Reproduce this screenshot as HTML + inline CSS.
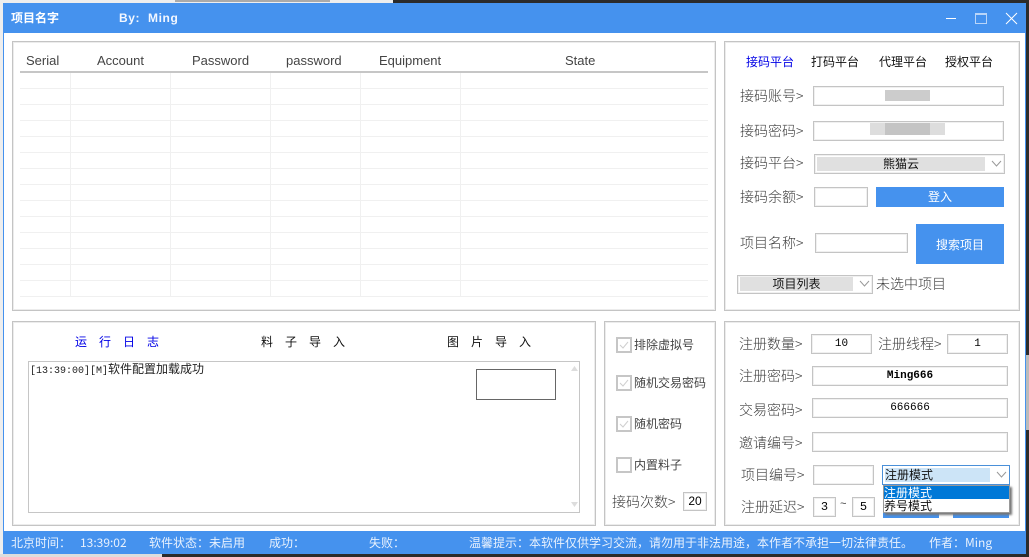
<!DOCTYPE html>
<html><head><meta charset="utf-8">
<style>
html,body{margin:0;padding:0;background:#2b2b2b;}
#r{position:relative;width:1029px;height:557px;overflow:hidden;background:#2b2b2b;font-family:"Liberation Sans","Noto Sans CJK SC",sans-serif;color:#333;}
#r div{position:absolute;box-sizing:border-box;}
.p{border:1px solid #c4c4c4;background:#fff;box-shadow:inset 0 0 0 1px #ececec;}
.i{border:1px solid #c4c4c4;background:#fff;box-shadow:inset 0 0 0 1px #f0f0f0;text-align:center;font:11px/19px "Liberation Mono","Noto Sans CJK SC",monospace;color:#000;}
.l{font:300 14px/20px "Noto Sans CJK SC",sans-serif;color:#3c3c3c;white-space:nowrap;}
.t{font:12px/16px "WenQuanYi Zen Hei","Noto Sans CJK SC",sans-serif;color:#111;white-space:nowrap;}
.b{background:#4592ee;color:#fff;text-align:center;font:12px/20px "Noto Sans CJK SC",sans-serif;}
.s{font:12px/23px "Noto Sans CJK SC","Liberation Sans",sans-serif;color:#e8f1fd;white-space:nowrap;top:531px;}
.h{font:13px/16px "Liberation Sans",sans-serif;color:#444;top:53px;white-space:nowrap;}
.c{width:16px;height:16px;border:2px solid #c6c6c6;background:#fff;left:616px;}
.k{font:12px/16px "Noto Sans CJK SC",sans-serif;color:#444;left:634px;white-space:nowrap;}
</style></head><body>
<div id="r">
<div style="left:0;top:0;width:393px;height:3px;background:#eee"></div>
<div style="left:175px;top:0;width:155px;height:2px;background:#aaa"></div>
<div style="left:0;top:3px;width:3px;height:554px;background:#eee"></div>
<div style="left:0;top:554px;width:162px;height:3px;background:#ddd"></div>
<div style="left:1026px;top:355px;width:3px;height:75px;background:#bbb"></div>

<div style="left:3px;top:3px;width:1023px;height:551px;background:#fff;border-left:1px solid #4592ee;border-right:1px solid #4592ee"></div>
<div style="left:3px;top:3px;width:1023px;height:30px;background:#4592ee"></div>
<div style="left:11px;top:10px;font:bold 12px/16px 'Noto Sans CJK SC',sans-serif;color:#fff;white-space:nowrap">项目名字</div>
<div style="left:119px;top:10px;font:bold 12px/16px 'Liberation Sans',sans-serif;color:#f2f7ff;letter-spacing:.6px;white-space:pre">By:  Ming</div>
<div style="left:946px;top:18px;width:10px;height:1px;background:#fff"></div>
<div style="left:975px;top:13px;width:12px;height:11px;border:1px solid #b9d5f8;border-top-width:2px"></div>
<svg style="position:absolute;left:1005px;top:12px" width="13" height="13" viewBox="0 0 13 13"><path d="M1 1L12 12M12 1L1 12" stroke="#fff" stroke-width="1" fill="none"/></svg>

<!-- table panel -->
<div class="p" style="left:12px;top:41px;width:704px;height:270px"></div>
<div class="h" style="left:26px">Serial</div>
<div class="h" style="left:97px">Account</div>
<div class="h" style="left:192px">Password</div>
<div class="h" style="left:286px">password</div>
<div class="h" style="left:379px">Equipment</div>
<div class="h" style="left:565px">State</div>
<div style="left:20px;top:71px;width:688px;height:2px;background:#c6c6c6"></div>
<svg style="position:absolute;left:20px;top:73px" width="688" height="224"><path d="M0 15.500H688M0 31.500H688M0 47.500H688M0 63.500H688M0 79.500H688M0 95.500H688M0 111.500H688M0 127.500H688M0 143.500H688M0 159.500H688M0 175.500H688M0 191.500H688M0 207.500H688M0 223.500H688M50.500 0V224M150.500 0V224M250.500 0V224M340.500 0V224M440.500 0V224" stroke="#f0f0f0" fill="none"/></svg>

<!-- right top -->
<div class="p" style="left:724px;top:41px;width:296px;height:270px"></div>
<div class="t" style="left:746px;top:54px;color:#0000e6">接码平台</div>
<div class="t" style="left:811px;top:54px">打码平台</div>
<div class="t" style="left:879px;top:54px">代理平台</div>
<div class="t" style="left:945px;top:54px">授权平台</div>
<div class="l" style="left:740px;top:86px">接码账号&gt;</div>
<div class="i" style="left:813px;top:86px;width:191px;height:20px"></div>
<div style="left:885px;top:90px;width:45px;height:11px;background:#ccc"></div>
<div class="l" style="left:740px;top:121px">接码密码&gt;</div>
<div class="i" style="left:813px;top:121px;width:191px;height:20px"></div>
<div style="left:870px;top:123px;width:75px;height:12px;background:#ddd"></div>
<div style="left:885px;top:123px;width:45px;height:12px;background:#c4c4c4"></div>
<div class="l" style="left:740px;top:153px">接码平台&gt;</div>
<div class="i" style="left:814px;top:154px;width:191px;height:20px"></div>
<div style="left:817px;top:157px;width:168px;height:14px;background:#e0e0e0;text-align:center;font:12px/14px 'Noto Sans CJK SC',sans-serif;color:#111">熊猫云</div>
<svg style="position:absolute;left:991px;top:160px" width="11" height="8"><path d="M1 1L5.500 6L10 1" stroke="#999" fill="none"/></svg>
<div class="l" style="left:740px;top:187px">接码余额&gt;</div>
<div class="i" style="left:814px;top:187px;width:54px;height:20px"></div>
<div class="b" style="left:876px;top:187px;width:128px;height:20px">登入</div>
<div class="l" style="left:740px;top:233px">项目名称&gt;</div>
<div class="i" style="left:815px;top:233px;width:93px;height:20px"></div>
<div class="b" style="left:916px;top:224px;width:88px;height:40px;line-height:41px">搜索项目</div>
<div class="i" style="left:737px;top:275px;width:136px;height:19px"></div>
<div style="left:740px;top:277px;width:113px;height:14px;background:#e0e0e0;text-align:center;font:12px/14px 'Noto Sans CJK SC',sans-serif;color:#111">项目列表</div>
<svg style="position:absolute;left:859px;top:280px" width="11" height="8"><path d="M1 1L5.500 6L10 1" stroke="#999" fill="none"/></svg>
<div class="l" style="left:876px;top:274px">未选中项目</div>

<!-- log panel -->
<div class="p" style="left:12px;top:321px;width:584px;height:205px"></div>
<div class="t" style="left:75px;top:334px;color:#0000e6;letter-spacing:12px">运行日志</div>
<div class="t" style="left:261px;top:334px;letter-spacing:12px">料子导入</div>
<div class="t" style="left:447px;top:334px;letter-spacing:12px">图片导入</div>
<div style="left:28px;top:361px;width:552px;height:152px;border:1px solid #c6c6c6;background:#fff"></div>
<div class="t" style="left:30px;top:361px;color:#222"><span style="font:10px/16px 'Liberation Mono',monospace">[13:39:00][M]</span>软件配置加载成功</div>
<div style="left:476px;top:369px;width:80px;height:31px;border:1px solid #666"></div>
<svg style="position:absolute;left:570px;top:363px" width="9" height="146"><path d="M1 8L4.500 3L8 8ZM1 139L8 139L4.500 144Z" fill="#ddd"/></svg>

<!-- mid panel -->
<div class="p" style="left:604px;top:321px;width:112px;height:205px"></div>
<div class="c" style="top:337px"></div><div class="k" style="top:337px">排除虚拟号</div>
<div class="c" style="top:375px"></div><div class="k" style="top:375px">随机交易密码</div>
<div class="c" style="top:416px"></div><div class="k" style="top:416px">随机密码</div>
<div class="c" style="top:457px"></div><div class="k" style="top:457px">内置料子</div>
<svg style="position:absolute;left:616px;top:337px" width="16" height="96"><path d="M4 8L7 11L12 5M4 46L7 49L12 43M4 87L7 90L12 84" stroke="#cfcfcf" fill="none"/></svg>
<div class="l" style="left:612px;top:492px">接码次数&gt;</div>
<div class="i" style="left:683px;top:492px;width:24px;height:19px;font:12px/17px 'Liberation Sans',sans-serif">20</div>

<!-- right bottom -->
<div class="p" style="left:724px;top:321px;width:296px;height:205px"></div>
<div class="l" style="left:739px;top:334px">注册数量&gt;</div>
<div class="i" style="left:811px;top:334px;width:61px;height:20px">10</div>
<div class="l" style="left:878px;top:334px">注册线程&gt;</div>
<div class="i" style="left:947px;top:334px;width:61px;height:20px">1</div>
<div class="l" style="left:739px;top:366px">注册密码&gt;</div>
<div class="i" style="left:812px;top:366px;width:196px;height:20px;font-weight:bold">Ming666</div>
<div class="l" style="left:739px;top:400px">交易密码&gt;</div>
<div class="i" style="left:812px;top:398px;width:196px;height:20px">666666</div>
<div class="l" style="left:739px;top:433px">邀请编号&gt;</div>
<div class="i" style="left:812px;top:432px;width:196px;height:20px"></div>
<div class="l" style="left:741px;top:465px">项目编号&gt;</div>
<div class="i" style="left:813px;top:465px;width:61px;height:20px"></div>
<div class="b" style="left:883px;top:505px;width:56px;height:13px"></div>
<div class="b" style="left:953px;top:505px;width:56px;height:13px"></div>
<div style="left:882px;top:465px;width:128px;height:20px;border:1px solid #4a90d9;background:#fff"></div>
<div style="left:885px;top:468px;width:105px;height:14px;background:#cce4f7;font:12px/14px 'Noto Sans CJK SC',sans-serif;color:#111;white-space:nowrap">注册模式</div>
<svg style="position:absolute;left:996px;top:471px" width="11" height="8"><path d="M1 1L5.500 6L10 1" stroke="#999" fill="none"/></svg>
<div style="left:883px;top:485px;width:127px;height:28px;background:#fff;border:1px solid #999;box-shadow:2px 2px 2px #777"></div>
<div style="left:884px;top:486px;width:125px;height:13px;background:#0078d7;font:12px/13px 'Noto Sans CJK SC',sans-serif;color:#fff;white-space:nowrap">注册模式</div>
<div style="left:884px;top:499px;width:125px;height:13px;font:12px/13px 'Noto Sans CJK SC',sans-serif;color:#111;white-space:nowrap">养号模式</div>
<div class="l" style="left:741px;top:497px">注册延迟&gt;</div>
<div class="i" style="left:813px;top:497px;width:23px;height:20px;font-size:12px">3</div>
<div style="left:840px;top:498px;font:11px/14px 'Liberation Mono',monospace;color:#444">~</div>
<div class="i" style="left:852px;top:497px;width:23px;height:20px;font-size:12px">5</div>

<!-- status -->
<div style="left:3px;top:531px;width:1023px;height:23px;background:#4592ee"></div>
<div class="s" style="left:11px">北京时间：</div>
<div class="s" style="left:80px">13:39:02</div>
<div class="s" style="left:149px">软件状态：未启用</div>
<div class="s" style="left:269px">成功：</div>
<div class="s" style="left:369px">失败：</div>
<div class="s" style="left:469px">温馨提示：本软件仅供学习交流，请勿用于非法用途，本作者不承担一切法律责任。</div>
<div class="s" style="left:929px">作者：Ming</div>
</div>
</body></html>
